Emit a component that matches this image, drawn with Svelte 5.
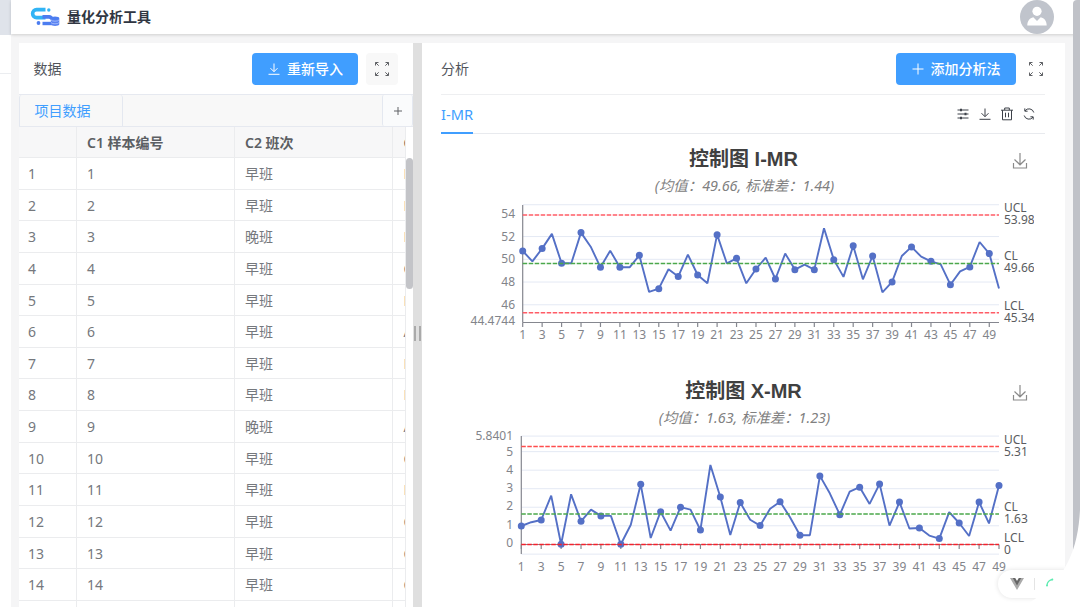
<script>
  const shifts = ['早班', '早班', '晚班', '早班', '早班', '早班', '早班', '早班', '晚班', '早班', '早班', '早班', '早班', '早班', '早班'];
  const machines = 'BBBCBABBACBCCCB';

  const charts = [
    {
      title: '控制图 I-MR',
      subtitle: '(均值：49.66, 标准差：1.44)',
      x0: 80.7,
      top: 70,
      bottom: 187.5,
      axisY: 187.5,
      zeroY: 124.3,
      zero: 50,
      unit: 11.37,
      labelX: 73,
      xLabelY: 204,
      grid: [54.8, 52, 50, 48, 46],
      ticks: [[54, 82.5], [52, 105.5], [50, 128], [48, 151], [46, 173.5], [44.4744, 190]],
      limits: [
        { name: 'UCL', value: '53.98', y: 80, color: '#ff5c66' },
        { name: 'CL', value: '49.66', y: 128.4, color: '#4ba84b' },
        { name: 'LCL', value: '45.34', y: 177.8, color: '#ff5c66' }
      ],
      values: [
        50.73, 49.82, 50.94, 52.23, 49.65, 49.65, 52.35, 51.11, 49.3, 50.76,
        49.3, 49.3, 50.35, 47.13, 47.42, 49.12, 48.48, 50.41, 48.62, 47.89,
        52.17, 49.65, 50.09, 47.89, 49.15, 50.15, 48.27, 50.5, 49.09, 49.53,
        49.09, 52.73, 49.97, 48.45, 51.2, 48.24, 50.29, 47.1, 48.01, 50.29,
        51.09, 50.23, 49.82, 49.56, 47.77, 48.94, 49.33, 51.52, 50.5, 47.42
      ]
    },
    {
      title: '控制图 X-MR',
      subtitle: '(均值：1.63, 标准差：1.23)',
      x0: 79.3,
      top: 69,
      bottom: 187,
      axisY: 177.5,
      zeroY: 177.3,
      zero: 0,
      unit: 18.53,
      labelX: 71,
      xLabelY: 204,
      grid: [5.8401, 5, 4, 3, 2, 1, -0.53],
      ticks: [[5.8401, 72.5], [5, 88.5], [4, 106.5], [3, 125], [2, 143], [1, 162], [0, 180]],
      limits: [
        { name: 'UCL', value: '5.31', y: 79.6, color: '#ff4d4d' },
        { name: 'CL', value: '1.63', y: 146.9, color: '#4ba84b' },
        { name: 'LCL', value: '0', y: 177.5, color: '#f5222d' }
      ],
      values: [
        0.99, 1.19, 1.31, 2.63, 0, 2.7, 1.24, 1.87, 1.53, 1.53,
        0, 1.06, 3.24, 0.34, 1.76, 0.74, 2, 1.87, 0.77, 4.28,
        2.55, 0.5, 2.25, 1.33, 1.01, 1.92, 2.3, 1.46, 0.49, 0.49,
        3.69, 2.75, 1.6, 2.84, 3.08, 2.18, 3.26, 1.01, 2.28, 0.85,
        0.88, 0.47, 0.31, 1.74, 1.15, 0.45, 2.28, 1.13, 3.17
      ]
    }
  ];

  const right = 557;
  const px = (c, i) => c.x0 + (i * (right - c.x0)) / (c.values.length - 1);
  const py = (c, v) => c.zeroY - (v - c.zero) * c.unit;
  const line = c => c.values.map((v, i) => `${px(c, i).toFixed(1)},${py(c, v).toFixed(1)}`).join(' ');
</script>

{#snippet download(size)}
  <svg width={size} height={size} viewBox="0 0 14 14" class="icon">
    <path d="M7 1.5v8M3.5 6.2 7 9.7l3.5-3.5M1.5 12.3h11" />
  </svg>
{/snippet}

{#snippet expand()}
  <svg width="16" height="16" viewBox="0 0 16 16" class="icon expand">
    <path d="M1.5 4.500v-3h3M1.500 1.500l3.200 3.200M11.500 1.500h3v3M14.500 1.500l-3.200 3.200M1.500 11.500v3h3M1.500 14.500l3.200-3.200M14.500 11.500v3h-3M14.500 14.500l-3.200-3.200" />
  </svg>
{/snippet}

<div class="page">
  <aside class="sidebar">
    <div class="side-top"></div>
    <div class="side-item"></div>
  </aside>

  <div class="content">
    <header class="header">
      <svg class="logo" width="30" height="20" viewBox="0 0 30 20">
        <path d="M15.500 2.600H6.600a4 4 0 0 0 0 8h8.900" fill="none" stroke="#31b4f5" stroke-width="3.600" />
        <circle cx="18.800" cy="3" r="1.700" fill="#31b4f5" />
        <path d="M12.500 9.900h6.500a3.500 3.500 0 0 1 3 2.200" fill="none" stroke="#4c7df0" stroke-width="3.600" />
        <circle cx="8.500" cy="16" r="1.900" fill="#4c7df0" />
        <path d="M12.500 16.500h9" stroke="#4c7df0" stroke-width="3.400" />
        <path d="M20.800 11.500v5.800c0 2.200 8.500 2.200 8.500 0v-5.800" fill="#5a83f2" />
        <ellipse cx="25" cy="11.300" rx="4.250" ry="1.700" fill="#4c7df0" />
        <path d="M21 13c1 1.600 7 1.600 8 0M21 15.600c1 1.600 7 1.600 8 0" fill="none" stroke="#b9ccfb" stroke-width=".7" />
      </svg>
      <h1>量化分析工具</h1>
      <svg class="avatar" width="34" height="34" viewBox="0 0 34 34">
        <circle cx="17" cy="17" r="17" fill="#c0c4cc" />
        <circle cx="17" cy="11.300" r="4.600" fill="#fff" />
        <path d="M7.300 25.500c0-4.500 2.300-7.500 6-8.300L17 21l3.700-3.800c3.700.8 6 3.800 6 8.300z" fill="#fff" />
      </svg>
    </header>

    <main class="main">
      <section class="data">
        <div class="bar">
          <span class="name">数据</span>
          <button class="primary import">{@render download(14)}<span>重新导入</span></button>
          <button class="square">{@render expand()}</button>
        </div>
        <div class="tabs">
          <div class="tab">项目数据</div>
          <button class="add">
            <svg width="10" height="10" viewBox="0 0 10 10" class="icon"><path d="M5 1v8M1 5h8" /></svg>
          </button>
        </div>
        <div class="table-wrap">
          <div class="table">
            <div class="row head">
              <div></div>
              <div>C1 样本编号</div>
              <div>C2 班次</div>
              <div>C</div>
            </div>
            {#each shifts as shift, i}
              <div class="row">
                <div>{i + 1}</div>
                <div>{i + 1}</div>
                <div>{shift}</div>
                <div>{machines[i]}</div>
              </div>
            {/each}
          </div>
          <div class="track"><div class="thumb"></div></div>
        </div>
      </section>

      <div class="splitter"><i></i><i></i></div>

      <section class="analysis">
        <div class="bar">
          <span class="name">分析</span>
          <button class="primary method">
            <svg width="14" height="14" viewBox="0 0 14 14" class="icon"><path d="M7 1.500v11M1.500 7h11" /></svg>
            <span>添加分析法</span>
          </button>
          <button class="plain">{@render expand()}</button>
        </div>
        <div class="methods">
          <div class="method-tab">I-MR</div>
          <div class="tools">
            <svg width="14" height="14" viewBox="0 0 14 14" class="icon">
              <path d="M1.500 3h11M1.500 7h11M1.500 11h11" />
              <path d="M5 1.800v2.400M9.500 5.800v2.400M5 9.800v2.400" stroke-width="2" />
            </svg>
            {@render download(14)}
            <svg width="14" height="14" viewBox="0 0 14 14" class="icon">
              <path d="M1 3.200h12M4.700 3V1h4.600v2M2.500 3.200v9.600h9V3.200M5.500 5.700v4.600M8.500 5.700v4.600" />
            </svg>
            <svg width="14" height="14" viewBox="0 0 14 14" class="icon">
              <path d="M2.200 8.500A5 5 0 0 0 11 10.200M11.800 5.500A5 5 0 0 0 3 3.800" />
              <path d="M2.800 1.400v2.800h2.800M11.200 12.600V9.800H8.400" />
            </svg>
          </div>
        </div>

        {#each charts as c}
          <svg class="chart" width="592" height="232" viewBox="0 0 592 232">
            <text class="title" x="301.500" y="31">{c.title}</text>
            <text class="subtitle" x="302.500" y="55.500">{c.subtitle}</text>
            <path class="save" d="M578 18v11M572.500 24.500l5.500 5.300 5.500-5.300M571.500 28v5h13v-5" />

            {#each c.grid as g}
              <path class="grid" d="M{c.x0} {py(c, g)}H{right}" />
            {/each}
            <path class="axis" d="M{c.x0} {c.top}V{c.bottom}M{c.x0} {c.axisY}H{right}" />
            {#each c.ticks as [label, y]}
              <text class="label" x={c.labelX} {y} text-anchor="end">{label}</text>
            {/each}
            {#each c.values as _, i}
              {#if i % 2 === 0}
                <path class="axis" d="M{px(c, i)} {c.axisY}v4.500" />
                <text class="label" x={px(c, i)} y={c.xLabelY} text-anchor="middle">{i + 1}</text>
              {/if}
            {/each}

            <polyline class="series" points={line(c)} />
            {#each c.values as v, i}
              {#if i % 2 === 0}
                <circle cx={px(c, i)} cy={py(c, v)} r="3.500" fill="#5470c6" />
              {/if}
            {/each}
            {#each c.limits as l}
              <path class="limit" d="M{c.x0} {l.y}H{right}" stroke={l.color} />
              <text class="mark" x="562" y={l.y - 3}>{l.name}</text>
              <text class="mark" x="562" y={l.y + 9}>{l.value}</text>
            {/each}
          </svg>
        {/each}
      </section>
    </main>
  </div>

  <div class="page-scroll"></div>

  <div class="devtools">
    <svg width="14" height="12" viewBox="0 0 14 12">
      <path d="M0 0h4.500L7 4l2.500-4H14L7 12z" fill="#aaa" />
      <path d="M2.800 0h2.400L7 3l1.800-3h2.400L7 7.500z" fill="#666" />
    </svg>
    <span></span>
    <svg width="16" height="16" viewBox="0 0 16 16">
      <path d="M2 9.500a6 6 0 0 1 5.500-6" fill="none" stroke="#5cebb0" stroke-width="1.300" />
      <circle cx="2" cy="9.500" r="1" fill="#5cebb0" />
      <circle cx="7.300" cy="3.500" r="1" fill="#5cebb0" />
    </svg>
  </div>

  <svg class="corner" width="60" height="100" viewBox="0 0 60 100">
    <path d="M60 3C58 41 47 76 2 100H60z" fill="#fff" />
  </svg>
</div>

<style>
  :global(body) {
    overflow: hidden;
    background: #fff;
  }

  .page {
    position: relative;
    display: flex;
    width: 1080px;
    height: 607px;
    overflow: hidden;
    font-family: 'Noto Sans', 'Noto Sans CJK SC', sans-serif;
    font-size: 14px;
    color: #606266;
  }

  button {
    display: flex;
    align-items: center;
    justify-content: center;
    padding: 0;
    border: none;
    background: none;
    font: inherit;
    color: inherit;
  }

  .icon {
    flex: none;
    fill: none;
    stroke: currentColor;
    stroke-width: 1;
  }

  .expand {
    stroke-width: 1;
  }

  .sidebar {
    flex: 0 0 10.5px;
    background: #fff;
  }
  .side-top {
    height: 35px;
    background: #dfe3ea;
  }
  .side-item {
    height: 38px;
    border-bottom: 1px solid #ebedf0;
  }

  .content {
    flex: 1;
    min-width: 0;
    display: flex;
    flex-direction: column;
    background: #f5f5f6;
  }

  .header {
    flex: 0 0 34px;
    display: flex;
    align-items: center;
    padding: 0 26.5px 0 19px;
    background: #fff;
    box-shadow: 0 1px 3px rgba(0, 0, 0, 0.16);
  }
  .header h1 {
    flex: 1;
    margin: 0 0 0 7.5px;
    font-size: 14px;
    line-height: 20px;
    font-weight: 700;
    color: #303642;
  }

  .main {
    flex: 1;
    min-height: 0;
    display: flex;
    margin: 9px 8px 0;
  }

  .bar {
    display: flex;
    align-items: center;
    height: 51px;
  }
  .name {
    flex: 1;
    padding-bottom: 1px;
    color: #51555c;
  }
  .primary {
    gap: 6px;
    height: 32px;
    border-radius: 4px;
    background: #409eff;
    color: #fff;
    font-weight: 500;
  }
  .primary span {
    padding-bottom: 2px;
  }

  .data {
    flex: 0 0 394.5px;
    display: flex;
    flex-direction: column;
    min-width: 0;
    background: #fff;
  }
  .data .bar {
    padding: 0 15px 0 15px;
  }
  .import {
    width: 106px;
    margin-right: 8px;
  }
  .square {
    width: 32px;
    height: 32px;
    border-radius: 4px;
    background: #f8f8f8;
  }

  .tabs {
    display: flex;
    justify-content: space-between;
    box-sizing: border-box;
    height: 33px;
    border: solid #e6e9f0;
    border-width: 1px 0;
    background: #f8f8f8;
  }
  .tab {
    width: 87px;
    padding-left: 15px;
    border: solid #e4e8f0;
    border-width: 0 1px;
    border-radius: 3px 3px 0 0;
    line-height: 32px;
    color: #409eff;
  }
  .add {
    width: 31px;
    border: solid #e4e8f0;
    border-width: 0 1px;
    border-radius: 2px;
    background: #fafbfc;
  }

  .table-wrap {
    flex: 1;
    min-height: 0;
    display: flex;
    overflow: hidden;
  }
  .table {
    flex: 0 0 387px;
    overflow: hidden;
  }
  .row {
    display: grid;
    grid-template-columns: 58.5px 158px 158px 12.5px;
    height: 31.65px;
    line-height: 32px;
    font-size: 14px;
    color: #75787d;
  }
  .row div {
    box-sizing: border-box;
    padding-left: 10px;
    overflow: hidden;
    white-space: nowrap;
    border: solid #ebecee;
    border-width: 0 1px 1px 0;
  }
  .row div:first-child {
    padding-left: 9.5px;
  }
  .row div:last-child {
    padding-left: 10.6px;
  }
  .row.head {
    height: 31px;
    background: #f7f7f8;
    font-weight: 600;
    color: #5c5f64;
  }
  .track {
    flex: 1;
  }
  .thumb {
    width: 7px;
    height: 131px;
    margin-top: 31px;
    border-radius: 4px;
    background: #c3c4c8;
  }

  .splitter {
    flex: 0 0 8.5px;
    display: flex;
    align-items: center;
    justify-content: space-between;
    box-sizing: border-box;
    padding: 16px 0.5px 0 1px;
    background: #dfdfdf;
  }
  .splitter i {
    width: 2px;
    height: 15px;
    background: #aaa;
  }

  .analysis {
    flex: 0 0 643.5px;
    box-sizing: border-box;
    padding: 0 20px 0 19.5px;
    background: #fff;
  }
  .analysis .bar {
    border-bottom: 1px solid #eeeff1;
  }
  .method {
    width: 120px;
    margin-right: 10.5px;
  }
  .plain {
    width: 19px;
  }

  .methods {
    display: flex;
    justify-content: space-between;
    box-sizing: border-box;
    height: 39px;
    border-bottom: 1px solid #e8eaee;
  }
  .method-tab {
    height: 37px;
    border-bottom: 2px solid #409eff;
    font-size: 14.7px;
    line-height: 39px;
    color: #409eff;
  }
  .tools {
    display: flex;
    align-items: center;
    gap: 7.7px;
    padding-right: 9.5px;
    color: #3c4048;
  }

  .chart {
    display: block;
    margin: 1px 0 -1px 0.5px;
    overflow: hidden;
  }
  .title {
    font: 700 20px 'Liberation Sans', 'Noto Sans CJK SC', sans-serif;
    text-anchor: middle;
    fill: #404040;
  }
  .subtitle {
    font-size: 14.4px;
    font-style: italic;
    text-anchor: middle;
    fill: #808080;
  }
  .save {
    fill: none;
    stroke: #8a8a8a;
    stroke-width: 1.2;
  }
  .grid {
    stroke: #e4e9f4;
    fill: none;
  }
  .axis {
    stroke: #85878f;
    stroke-width: 1.2;
    fill: none;
  }
  .label {
    font-size: 12px;
    fill: #82848a;
  }
  .series {
    fill: none;
    stroke: #5470c6;
    stroke-width: 1.9;
    stroke-linejoin: bevel;
  }
  .limit {
    fill: none;
    stroke-width: 1.5;
    stroke-dasharray: 4.5 1.5;
  }
  .mark {
    font-size: 12px;
    fill: #5a5c60;
  }

  .page-scroll {
    position: absolute;
    top: 0;
    right: 0;
    width: 7px;
    height: 607px;
    border-radius: 4px 0 0 0;
    background: #c0c2c8;
  }

  .devtools {
    position: absolute;
    left: 998px;
    top: 570px;
    display: flex;
    align-items: center;
    box-sizing: border-box;
    width: 82px;
    height: 28px;
    padding-left: 12px;
    border-radius: 14px;
    background: #fff;
    box-shadow: 0 0 5px rgba(0, 0, 0, 0.12);
  }
  .devtools span {
    width: 1px;
    height: 12px;
    margin: 0 10px;
    background: #e4e4e4;
  }

  .corner {
    position: absolute;
    right: 0;
    bottom: 0;
  }
</style>
